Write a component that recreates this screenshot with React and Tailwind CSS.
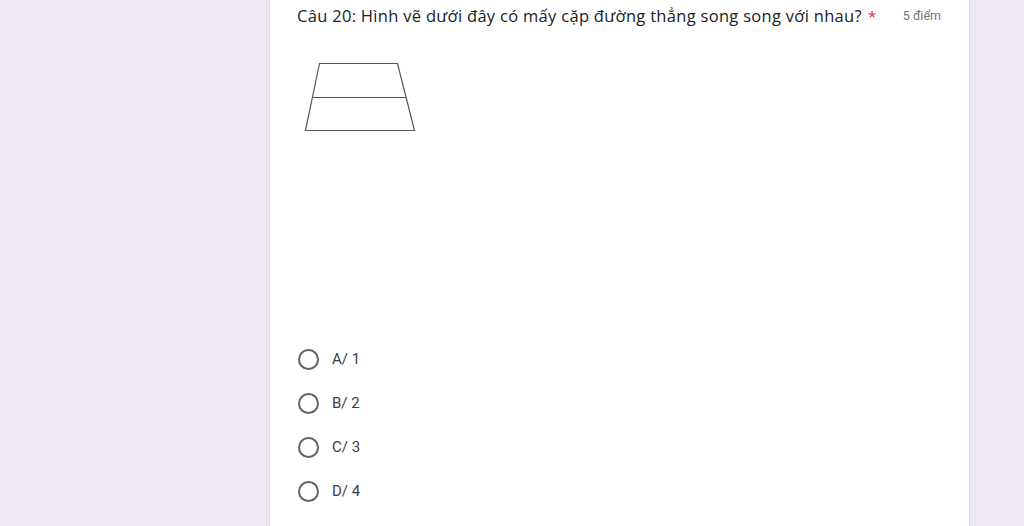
export default function App() {
  const options = ["A/ 1", "B/ 2", "C/ 3", "D/ 4"];
  return (
    <div className="w-[1024px] h-[526px] bg-[#ede7f6] overflow-hidden flex" style={{ fontFamily: "Roboto, sans-serif" }}>
      <div className="ml-[269px] w-[701px] h-full bg-white border-l border-r border-[#dadce0] pl-[27px] pr-[28px]">
        <div className="flex items-start pt-[5px]">
          <div className="flex-1 text-[16.5px] leading-[22px] text-[#202124] tracking-[0.3px]" style={{ fontFamily: '"Open Sans", sans-serif' }}>
            Câu 20: Hình vẽ dưới đây có mấy cặp đường thẳng song song với nhau?
            <span className="text-[#d93025] text-[15px] ml-[6px]">*</span>
          </div>
          <div className="text-[12.5px] leading-[22px] text-[#70757a]">5 điểm</div>
        </div>
        <div className="h-[310px] pt-[31px]">
          <svg width="120" height="80" viewBox="0 0 120 80" className="ml-[7px]">
            <polygon points="15.5,5.5 93.5,5.5 110.5,72.5 1.5,72.5" fill="none" stroke="#555" strokeWidth="1.2" />
            <line x1="9" y1="39.5" x2="102" y2="39.5" stroke="#555" strokeWidth="1.2" />
          </svg>
        </div>
        <div className="flex flex-col">
          {options.map((o) => (
            <div key={o} className="flex items-center h-[44px]">
              <div className="w-[21px] h-[21px] ml-[1px] rounded-full border-2 border-[#5f6368]" />
              <span className="ml-[13px] text-[15px] text-[#3c4043]">{o}</span>
            </div>
          ))}
        </div>
      </div>
    </div>
  );
}
